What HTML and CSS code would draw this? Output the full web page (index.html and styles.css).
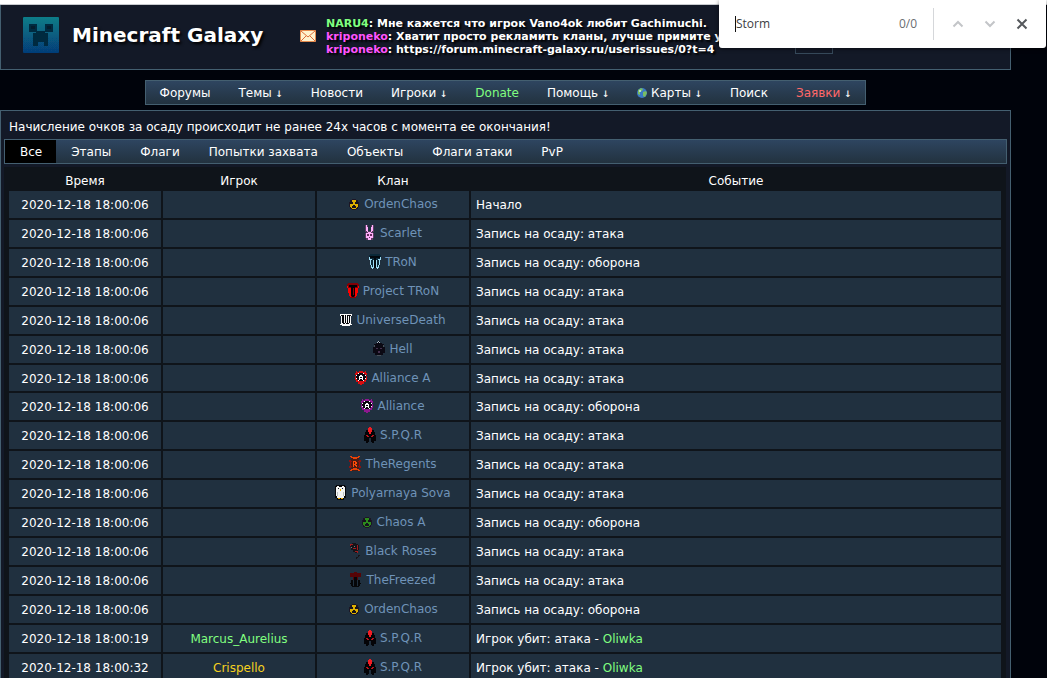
FILE: index.html
```
<!DOCTYPE html>
<html lang="ru">
<head>
<meta charset="utf-8">
<title>Minecraft Galaxy</title>
<link rel="stylesheet" href="styles.css">
</head>
<body>
<svg class="sprites" aria-hidden="true">
  <symbol id="rad" viewBox="0 0 12 16">
    <path d="M4 3h4v1h2v2h1v5h-1v2h-2v1h-4v-1h-2v-2h-1v-5h1v-2h2z" fill="#1c1624"/>
    <path d="M4 4h4v1h1v1h1v5h-1v1h-1v1h-4v-1h-1v-1h-1v-5h1v-1h1z" fill="currentColor"/>
    <path d="M3 5h1v1h1v2h-3v-2h1zM8 5h1v1h1v2h-3v-2h1zM5 9h2v1h1v2h-4v-2h1z" fill="#15121c"/>
  </symbol>
  <symbol id="rabbit" viewBox="0 0 12 16">
    <path d="M1 0h3v7h-3zM7 0h3v7h-3zM2 6h7v9h-7zM1 8h9v5h-9z" fill="#5c3c63"/>
    <path d="M2 0h1v2h1v5h-1v-1h-1zM8 0h1v6h-1v1h-1v-5h1zM4 7h3v1h2v5h-2v2h-3v-2h-2v-5h2z" fill="#ffb0fb"/>
    <path d="M3 9h2v2h-2zM6 9h2v2h-2zM5 12h1v1h-1z" fill="#64305f"/>
  </symbol>
  <symbol id="tron" viewBox="0 0 12 16">
    <path d="M1 0h10v1h1v4h-1v5h-1v3h-1v1h-6v-1h-1v-3h-1v-5h-1v-4h1z" fill="#0a2838"/>
    <path d="M0 3h1v2h2v1h-1v5h1v2h1v2h-1v-1h-1v-3h-1v-5h-1zM12 3h-1v2h-2v1h1v5h-1v2h-1v2h1v-1h1v-3h1v-5h1zM4 6h1v8h-1zM7 6h1v8h-1z" fill="#9cdcf4"/>
    <path d="M1 2h10v2h-4v10h-2v-10h-4z" fill="#02090f"/>
  </symbol>
  <symbol id="ptron" viewBox="0 0 12 16">
    <path d="M1 0h10v1h1v4h-1v5h-1v3h-1v2h-6v-2h-1v-3h-1v-5h-1v-4h1z" fill="#800006"/>
    <path d="M0 3h1v2h3v9h-1v-1h-1v-3h-1v-5h-1zM12 3h-1v2h-3v9h1v-1h1v-3h1v-5h1z" fill="#ff0000"/>
    <path d="M2 2h8v2h-2v9h-1v1h-2v-1h-1v-9h-2z" fill="#050207"/>
    <path d="M6 5h1v7h-1z" fill="#900006"/>
  </symbol>
  <symbol id="universe" viewBox="0 0 12 16">
    <path d="M0 2h12v2h-1v8h1v1h-2v1h-8v-1h-2v-1h1v-8h-1z" fill="#f8f8f8"/>
    <path d="M1 3h3v8h1v1h-2v-1h-1v-7h-1zM5 3h1v8h-1zM7 3h4v1h-1v7h-1v1h-3v-1h1z" fill="#050508"/>
    <path d="M8 4h1v7h-1z" fill="#f8f8f8"/>
  </symbol>
  <symbol id="hell" viewBox="0 0 12 16">
    <path d="M5 0h2v2h2v1h2v3h1v6h-2v2h-2v1h-4v-1h-2v-2h-2v-6h1v-3h2v-1h2z" fill="#0b0913"/>
    <path d="M5 0h1v1h1v1h-1v-1h-1v1h-1v-1h1z" fill="#aebdc8"/>
    <path d="M3 7h2v1h-2zM7 7h2v1h-2zM5 10h2v2h-2z" fill="#46304f"/>
    <path d="M1 4h1v2h-1zM10 4h1v2h-1zM4 14h4v1h-4z" fill="#485059"/>
  </symbol>
  <symbol id="shield" viewBox="0 0 12 16">
    <path d="M1 1h1v1h2v-1h4v1h2v-1h1v2h1v2h-1v1h1v4h-1v2h-2v2h-2v1h-2v-1h-2v-2h-2v-2h-1v-4h1v-1h-1v-2h1z" fill="currentColor"/>
    <path d="M3 3h6v1h1v1h1v4h-1v1h-1v1h-6v-1h-1v-1h-1v-4h1v-1h1z" fill="#0b0510"/>
    <path d="M3 3h1v1h-1zM8 3h1v1h-1zM1 5h1v1h-1zM10 5h1v1h-1zM1 8h1v1h-1zM10 8h1v1h-1zM3 10h1v1h-1zM8 10h1v1h-1zM5 5h2v1h1v4h-1v-1h-2v1h-1v-4h1z" fill="#fff"/>
    <path d="M5 7h2v1h-2z" fill="#0b0510"/>
  </symbol>
  <symbol id="helmet" viewBox="0 0 12 16">
    <path d="M4 2h4v1h2v2h1v3h1v6h-2v2h-2v-1h-1v-4h-2v4h-1v1h-2v-2h-2v-6h1v-3h1v-2h2z" fill="#040407"/>
    <path d="M5 0h2v1h1v4h-1v2h-2v-2h-1v-4h1z" fill="#f21d24"/>
    <path d="M2 8h2v1h1v1h-2v-1h-1zM8 8h2v1h-1v1h-2v-1h1z" fill="#b5151d"/>
  </symbol>
  <symbol id="regents" viewBox="0 0 12 16">
    <path d="M2 1h8v3h1v8h-1v3h-8v-3h-1v-8h1z" fill="#491b13"/>
    <path d="M1 0h2v1h6v-1h2v1h-1v1h-2v1h-4v-1h-2v-1h-1zM1 15h2v-1h6v1h2v-1h-1v-1h-2v-1h-4v1h-2v1h-1z" fill="#e94207"/>
    <path d="M0 4h2v1h1v1h-1v4h1v1h-1v1h-2v-2h1v-4h-1zM12 4h-2v1h-1v1h1v4h-1v1h1v1h2v-2h-1v-4h1z" fill="#8c1210"/>
    <path d="M4 5h3v1h1v2h-1v1h1v2h-1v-1h-1v-1h-1v2h-1zM5 6v2h1v-2z" fill="#ff4a09"/>
  </symbol>
  <symbol id="owl" viewBox="0 0 12 16">
    <path d="M1 0h9v1h1v12h-2v2h-7v-2h-2v-12h1z" fill="#07080b"/>
    <path d="M2 1h2v1h3v-1h2v1h1v9h-1v2h-7v-2h-1v-9h1z" fill="#f3f4f2"/>
    <path d="M3 3h1v1h-1zM7 3h1v1h-1z" fill="#15171a"/>
    <path d="M2 7h1v4h-1zM8 7h1v4h-1z" fill="#b9c0c2"/>
    <path d="M5 4h1v2h-1zM3 13h2v1h-2zM6 13h2v1h-2z" fill="#f0b000"/>
  </symbol>
  <symbol id="rose" viewBox="0 0 12 16">
    <path d="M3 0h4v1h2v1h1v5h-1v3h-3v-1h-2v-2h-2v-3h-1v-2h2zM9 12h2v1h-1v1h-1v1h-1v1h-1v-2h2z" fill="#151419"/>
    <path d="M1 1h3v1h-2v1h-1zM8 2h1v5h-1zM4 5h3v1h-3zM6 8h3v2h-1v-1h-2z" fill="#a11c1e"/>
    <path d="M2 4h1v1h-1zM5 3h1v1h-1z" fill="#71767a"/>
  </symbol>
  <symbol id="freezed" viewBox="0 0 12 16">
    <path d="M0 1h4v-1h3v1h4v4h-3v3h-5v-3h-3z" fill="#560406"/>
    <path d="M4 5h3v10h-3zM1 8h2v6h1v1h-2v-1h-1zM8 8h2v6h-1v1h-2v-1h1zM0 11h3v1h-3zM8 11h3v1h-3z" fill="#050609"/>
  </symbol>
</svg>

<header class="header">
  <a class="brand" href="#">
    <svg class="logo" viewBox="0 0 38 38" aria-hidden="true">
      <defs>
        <linearGradient id="logo-fill" x1="0" y1="0" x2="0" y2="1">
          <stop offset="0" stop-color="#087d88"/><stop offset="1" stop-color="#063d78"/>
        </linearGradient>
        <filter id="soft"><feGaussianBlur stdDeviation=".6"/></filter>
      </defs>
      <rect x="1" y="1" width="36" height="36" rx="1" fill="url(#logo-fill)" filter="url(#soft)"/>
      <path d="M7 8h8v7h8v-7h8v8h-8v1h3v13h-4v-4h-6v4h-5v-13h3v-1h-7z" fill="#062a40" filter="url(#soft)"/>
      <path d="M9 10h4v3h-4zM25 10h4v3h-4z" fill="#041d2d"/>
    </svg>
    <span class="title">Minecraft Galaxy</span>
  </a>
  <a class="mail" href="#" aria-label="Почта">
    <svg viewBox="0 0 16 12" aria-hidden="true">
      <path d="M.5.5h15v11h-15z" fill="#fff3cf" stroke="#e58b4e"/>
      <path d="M1 1l7 6 7-6M1 11l5-5M15 11l-5-5" fill="none" stroke="#dc6c3a"/>
    </svg>
  </a>
  <div class="chat">
    <div><a class="green" href="#">NARU4</a>: Мне кажется что игрок Vano4ok любит Gachimuchi.</div>
    <div><a class="pink" href="#">kriponeko</a>: Хватит просто рекламить кланы, лучше примите у</div>
    <div><a class="pink" href="#">kriponeko</a>: https://forum.minecraft-galaxy.ru/userissues/0?t=4</div>
  </div>
  <button class="header-button" type="button" aria-label="Меню"></button>
</header>

<nav class="bar menu">
  <a href="#">Форумы</a>
  <a href="#">Темы <span class="arrow">↓</span></a>
  <a href="#">Новости</a>
  <a href="#">Игроки <span class="arrow">↓</span></a>
  <a class="green" href="#">Donate</a>
  <a href="#">Помощь <span class="arrow">↓</span></a>
  <a href="#"><svg class="globe" viewBox="0 0 10 10" aria-hidden="true"><circle cx="5" cy="5" r="5" fill="#3a79c6"/><path d="M1 2l3-2 2 1-1 2-2 1v3l-2-1zM6 4l3-1 1 2-2 4-2-1z" fill="#79bd63"/><circle cx="3" cy="3" r="1" fill="#cde6ef"/></svg> Карты <span class="arrow">↓</span></a>
  <a href="#">Поиск</a>
  <a href="#"><span class="red">Заявки</span> <span class="arrow">↓</span></a>
</nav>

<main class="content">
  <p class="notice">Начисление очков за осаду происходит не ранее 24х часов с момента ее окончания!</p>
  <nav class="bar tabs">
    <a class="active" href="#">Все</a>
    <a href="#">Этапы</a>
    <a href="#">Флаги</a>
    <a href="#">Попытки захвата</a>
    <a href="#">Объекты</a>
    <a href="#">Флаги атаки</a>
    <a href="#">PvP</a>
  </nav>
  <div class="panel">
    <table class="log">
      <thead><tr><th class="col">Время</th><th class="col">Игрок</th><th class="col">Клан</th><th>Событие</th></tr></thead>
      <tbody>
        <tr><td>2020-12-18 18:00:06</td><td></td><td><a class="clan" href="#"><svg class="gold"><use href="#rad"/></svg>OrdenChaos</a></td><td>Начало</td></tr>
        <tr><td>2020-12-18 18:00:06</td><td></td><td><a class="clan" href="#"><svg><use href="#rabbit"/></svg>Scarlet</a></td><td>Запись на осаду: атака</td></tr>
        <tr><td>2020-12-18 18:00:06</td><td></td><td><a class="clan" href="#"><svg><use href="#tron"/></svg>TRoN</a></td><td>Запись на осаду: оборона</td></tr>
        <tr><td>2020-12-18 18:00:06</td><td></td><td><a class="clan" href="#"><svg><use href="#ptron"/></svg>Project TRoN</a></td><td>Запись на осаду: атака</td></tr>
        <tr><td>2020-12-18 18:00:06</td><td></td><td><a class="clan" href="#"><svg><use href="#universe"/></svg>UniverseDeath</a></td><td>Запись на осаду: атака</td></tr>
        <tr><td>2020-12-18 18:00:06</td><td></td><td><a class="clan" href="#"><svg><use href="#hell"/></svg>Hell</a></td><td>Запись на осаду: атака</td></tr>
        <tr class="short"><td>2020-12-18 18:00:06</td><td></td><td><a class="clan" href="#"><svg class="crimson"><use href="#shield"/></svg>Alliance A</a></td><td>Запись на осаду: атака</td></tr>
        <tr><td>2020-12-18 18:00:06</td><td></td><td><a class="clan" href="#"><svg class="violet"><use href="#shield"/></svg>Alliance</a></td><td>Запись на осаду: оборона</td></tr>
        <tr><td>2020-12-18 18:00:06</td><td></td><td><a class="clan" href="#"><svg><use href="#helmet"/></svg>S.P.Q.R</a></td><td>Запись на осаду: атака</td></tr>
        <tr><td>2020-12-18 18:00:06</td><td></td><td><a class="clan" href="#"><svg><use href="#regents"/></svg>TheRegents</a></td><td>Запись на осаду: атака</td></tr>
        <tr><td>2020-12-18 18:00:06</td><td></td><td><a class="clan" href="#"><svg><use href="#owl"/></svg>Polyarnaya Sova</a></td><td>Запись на осаду: атака</td></tr>
        <tr><td>2020-12-18 18:00:06</td><td></td><td><a class="clan" href="#"><svg class="leaf"><use href="#rad"/></svg>Chaos A</a></td><td>Запись на осаду: оборона</td></tr>
        <tr><td>2020-12-18 18:00:06</td><td></td><td><a class="clan" href="#"><svg><use href="#rose"/></svg>Black Roses</a></td><td>Запись на осаду: атака</td></tr>
        <tr><td>2020-12-18 18:00:06</td><td></td><td><a class="clan" href="#"><svg><use href="#freezed"/></svg>TheFreezed</a></td><td>Запись на осаду: атака</td></tr>
        <tr><td>2020-12-18 18:00:06</td><td></td><td><a class="clan" href="#"><svg class="gold"><use href="#rad"/></svg>OrdenChaos</a></td><td>Запись на осаду: оборона</td></tr>
        <tr><td>2020-12-18 18:00:19</td><td><a class="green" href="#">Marcus_Aurelius</a></td><td><a class="clan" href="#"><svg><use href="#helmet"/></svg>S.P.Q.R</a></td><td>Игрок убит: атака - <a class="green" href="#">Oliwka</a></td></tr>
        <tr><td>2020-12-18 18:00:32</td><td><a class="yellow" href="#">Crispello</a></td><td><a class="clan" href="#"><svg><use href="#helmet"/></svg>S.P.Q.R</a></td><td>Игрок убит: атака - <a class="green" href="#">Oliwka</a></td></tr>
      </tbody>
    </table>
  </div>
</main>

<form class="find">
  <input type="text" value="Storm" aria-label="Найти на странице">
  <span class="count">0/0</span>
  <span class="divider"></span>
  <button type="button" class="dim" aria-label="Назад"><svg viewBox="0 0 12 12"><path d="M1.500 8.500L6 4l4.500 4.500"/></svg></button>
  <button type="button" class="dim" aria-label="Вперёд"><svg viewBox="0 0 12 12"><path d="M1.500 3.500L6 8l4.500-4.500"/></svg></button>
  <button type="button" aria-label="Закрыть"><svg viewBox="0 0 12 12"><path d="M1.500 1.500l9 9M10.500 1.500l-9 9"/></svg></button>
</form>
</body>
</html>
```
FILE: styles.css
```
* { box-sizing: border-box; }

html {
  height: 100%;
  overflow: hidden;
  background: #00030b;
}

body {
  height: 100%;
  margin: 0;
  padding-right: 36px;
  overflow: hidden;
  background: linear-gradient(#fff 4px, #c8cbcf 4px, #c8cbcf 5px, transparent 5px);
  color: #fff;
  font: 12px/16px "DejaVu Sans", Verdana, sans-serif;
}

a { color: inherit; text-decoration: none; }

.sprites { position: absolute; width: 0; height: 0; }
.sprites symbol { shape-rendering: crispEdges; }

.green { color: #80ff80; }
.pink { color: #ff55ff; }
.red { color: #ff6868; }
.yellow { color: #f5d020; }

.header {
  display: flex;
  height: 65px;
  padding-left: 21px;
  margin-top: 5px;
  border: 1px solid #445f70;
  border-top: 0;
  background: #131927;
}

.brand { display: flex; gap: 12px; align-items: flex-start; width: 278px; padding-top: 11px; }
.logo { width: 38px; height: 38px; }
.title { padding-top: 6px; font-size: 20px; line-height: 26px; font-weight: bold; text-shadow: 2px 2px 3px #000; white-space: nowrap; }

.mail { padding-top: 25px; }
.mail svg { display: block; width: 16px; height: 12px; }

.chat {
  width: 479px;
  padding: 12px 0 0 10px;
  font-size: 11px;
  line-height: 13px;
  font-weight: bold;
  text-shadow: 2px 2px 2px #000;
  white-space: nowrap;
}

.header-button {
  width: 38px;
  height: 38px;
  margin-top: 11px;
  border: 1px solid #36495a;
  background: #131927;
}

.bar {
  display: flex;
  border: 1px solid #445f70;
  background: linear-gradient(#2e4560, #22323f);
  font-size: 12px;
  line-height: 21px;
  white-space: nowrap;
}
.bar a { padding: 2px 14px 0 15px; }

.menu { width: max-content; margin: 10px auto 5px; }
.menu a { padding: 2px 14px 0; }
.arrow { font-family: "DejaVu Sans Mono", monospace; line-height: 1; }
.globe { width: 10px; height: 10px; vertical-align: -1px; }

.content {
  padding: 8px 3px 0;
  border: 1px solid #445f70;
  background: #131927;
}
.notice { margin: 0; padding: 0 5px 4px; }
.tabs .active { background: #000; }

.panel { margin: 3px 1px 0 0; padding: 0 3px; background: #0f141a; }

.log { width: 100%; border-spacing: 2px; table-layout: fixed; }
.log th { height: 20px; padding: 4px 0 0; font-weight: normal; }
.log .col { width: 152px; }
.log td { height: 27px; padding: 1px 5px 0; background: #20303f; text-align: center; white-space: nowrap; }
.log td:last-child { text-align: left; }
.log .short td { height: 26px; }

.clan { display: flex; gap: 4px; align-items: center; justify-content: center; height: 16px; margin-top: -2px; color: #6f93b8; }
.clan svg { width: 12px; height: 16px; }
.clan .gold { color: #dcb000; }
.clan .leaf { color: #2c8a1d; }
.clan .crimson { color: #d60d10; }
.clan .violet { color: #8d178f; }

.find {
  position: absolute;
  top: 0;
  right: 1px;
  display: flex;
  align-items: center;
  width: 327px;
  height: 48px;
  padding: 0 14px 0 16px;
  border-radius: 0 0 3px 3px;
  background: #fff;
  box-shadow: 0 1px 4px rgba(0, 0, 0, .5);
  color: #6a6d71;
  font: 12px/16px "Open Sans", "Noto Sans", sans-serif;
}
.find input {
  flex: 1;
  min-width: 0;
  height: 16px;
  padding: 0;
  border: 0;
  border-left: 1px solid #111;
  outline: 0;
  background: none;
  color: #3c4043;
  font: inherit;
}
.divider { width: 1px; height: 32px; margin: 0 14px 0 16px; background: #d5d7da; }
.find button { display: grid; place-items: center; width: 20px; height: 20px; margin-left: 12px; padding: 0; border: 0; background: none; }
.divider + button { margin-left: 0; }
.find button svg { width: 12px; height: 12px; fill: none; stroke: #55585c; stroke-width: 2; }
.find .dim svg { stroke: #c3c5c8; }
```
